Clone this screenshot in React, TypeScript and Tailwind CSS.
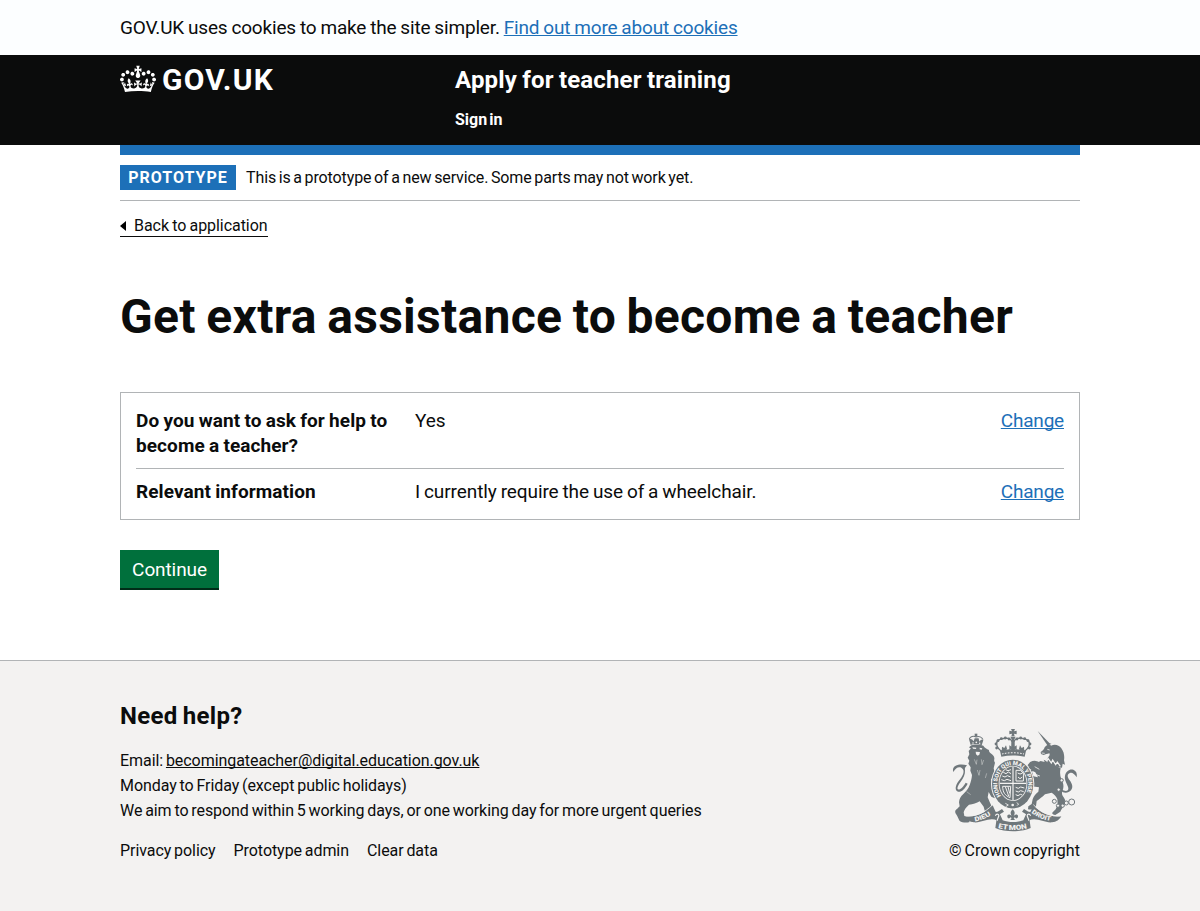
import React from "react";

const CROWN =
  "M25 30.2c3.5 1.5 7.7-.2 9.1-3.7 1.5-3.6-.2-7.8-3.9-9.2-3.6-1.4-7.6.3-9.1 3.9-1.4 3.5.3 7.5 3.9 9zM9 39.5c3.6 1.5 7.8-.2 9.2-3.7 1.5-3.6-.2-7.8-3.9-9.1-3.6-1.5-7.6.2-9.1 3.8-1.4 3.5.3 7.5 3.8 9zM4.4 57.2c3.5 1.5 7.7-.2 9.1-3.8 1.5-3.6-.2-7.7-3.9-9.1-3.5-1.5-7.6.3-9.1 3.8-1.4 3.5.3 7.6 3.9 9.1zm38.3-21.4c3.5 1.5 7.7-.2 9.1-3.8 1.5-3.6-.2-7.7-3.9-9.1-3.6-1.5-7.6.3-9.1 3.8-1.3 3.6.4 7.7 3.9 9.1zm64.4-5.6c-3.6 1.5-7.8-.2-9.1-3.7-1.5-3.6.2-7.8 3.8-9.2 3.6-1.4 7.7.3 9.2 3.9 1.3 3.5-.4 7.5-3.9 9zm15.9 9.3c-3.6 1.5-7.7-.2-9.1-3.7-1.5-3.6.2-7.8 3.7-9.1 3.6-1.5 7.7.2 9.2 3.8 1.5 3.5-.3 7.5-3.8 9zm4.7 17.7c-3.6 1.5-7.8-.2-9.2-3.8-1.5-3.6.2-7.7 3.9-9.1 3.6-1.5 7.7.3 9.2 3.8 1.3 3.5-.4 7.6-3.9 9.1zM89.3 35.8c-3.6 1.5-7.8-.2-9.2-3.8-1.4-3.6.2-7.7 3.9-9.1 3.6-1.5 7.7.3 9.2 3.8 1.4 3.6-.3 7.7-3.9 9.1zM69.7 17.7l8.9 4.7V9.3l-8.9 2.8c-.2-.3-.5-.6-.9-.9L72.4 0H59.6l3.5 11.2c-.3.3-.6.5-.9.9l-8.8-2.8v13.1l8.8-4.7c.3.3.6.7.9.9l-5 15.4v.1c-.2.8-.4 1.6-.4 2.4 0 4.1 3.1 7.5 7 8.1h.2c.3 0 .7.1 1 .1.4 0 .7 0 1-.1h.2c4-.6 7.1-4.1 7.1-8.1 0-.8-.1-1.7-.4-2.4V34l-5.1-15.4c.4-.2.7-.6 1-.9zM66 92.8c16.9 0 32.8 1.1 47.1 3.2 4-16.9 8.9-26.7 14-33.5l-9.6-3.4c1 4.9 1.1 7.2 0 10.2-1.5-1.4-3-4.3-4.2-8.7L108.6 76c2.8-2 5-3.2 7.5-3.3-4.4 9.4-10 11.9-13.6 11.2-4.3-.8-6.3-4.6-5.6-7.9 1-4.7 5.7-5.9 8-.5 4.3-8.7-3-11.4-7.6-8.8 7.1-7.2 7.9-13.5 2.1-21.1-8 6.1-8.1 12.3-4.5 20.8-4.7-5.4-12.1-2.5-9.5 6.2 3.4-5.2 7.9-2 7.2 3.1-.6 4.3-6.4 7.8-13.5 7.2-10.3-.9-10.9-8-11.2-13.8 2.5-.5 7.1 1.8 11 7.3L80.2 60c-4.1 4.4-8 5.3-12.3 5.4 1.4-4.4 8-11.6 8-11.6H55.5s6.4 7.2 7.9 11.6c-4.2-.1-8-1-12.3-5.4l1.4 16.4c3.9-5.5 8.5-7.7 10.9-7.3-.3 5.8-.9 12.8-11.1 13.8-7.2.6-12.9-2.9-13.5-7.2-.7-5 3.8-8.3 7.1-3.1 2.7-8.7-4.6-11.6-9.4-6.2 3.7-8.5 3.6-14.7-4.6-20.8-5.8 7.6-5 13.9 2.2 21.1-4.7-2.6-11.9.1-7.7 8.8 2.3-5.5 7.1-4.2 8.1.5.7 3.3-1.3 7.1-5.7 7.9-3.5.7-9-1.8-13.5-11.2 2.5.1 4.7 1.3 7.5 3.3l-4.7-15.4c-1.2 4.4-2.7 7.2-4.3 8.7-1.1-3-.9-5.3 0-10.2l-9.5 3.4c5 6.9 9.9 16.7 14 33.5 14.8-2.1 30.8-3.2 47.7-3.2z";

function Container({ children, className = "" }: { children?: React.ReactNode; className?: string }) {
  return <div className={"mx-auto w-[960px] " + className}>{children}</div>;
}

function Crest() {
  const ink = "#6f777b";
  const paper = "#f3f2f1";
  return (
    <svg viewBox="27 24 393 315" width="131" height="105" fill={ink} stroke="none">
      {/* lion */}
      <path d="M88 84c0-5 5-8 10-9 10-2 22-2 32 2 4 6 10 10 17 13-1 4 2 7 5 10 8 5 12 11 11 17-1 5-1 7 2 11l-4 17 3 13 4 12-2 12-8-7-5 3 3 12 7 11 6 12 1 15-6 7-10-5-8-14-3 16 6 14 7 15 5 10 10 9-2 13c-12 2-22-2-28-9-6-7-8-16-10-24l-12-16c-9 6-20 9-32 10-9 8-14 15-16 23l2 10 12 8 4 11c-10 3-22 2-30-3-4-7-6-14-11-21-4-6-3-12 3-15l8-8-2-12c1-11 5-18 13-25 8-8 15-15 19-27 4-10 6-19 7-30l-5-13 1-10-7-11 3-9-5-9 5-10-2-10 7-8z" />
      <path d="M83 191c-10 18-19 26-29 24-10-3-9-18 2-32 12-14 22-32 8-40-10-4-17 2-24 13-3-9 0-16 7-19 8-4 22-5 34-1-6 6-7 10-6 15 1 12-5 24-13 34-8 11-12 20-8 23 5 3 15-6 23-20z" />
      <path d="M87 58l5 17c9-4 24-4 33 1l5-15c-4-3-8-2-12 4l-2-10h-12l-3 9c-4-7-9-9-14-6z" />
      <path d="M88 57c3-8 12-10 20-6 9-3 18 0 21 8" fill="none" stroke={ink} strokeWidth="3.2" />
      <path d="M104 41h8v9h-8z" />
      <g fill={paper}>
        <circle cx="99" cy="69" r="2.2" />
        <circle cx="109" cy="67" r="2.6" />
        <circle cx="119" cy="70" r="2.2" />
        <path d="M97 82l12 1-1 4-9-1zM119 83l8 2-2 4-6-1zM107 95l13 1-2 8-5 3-5-4z" />
      </g>
      <path d="M103 118l6 15 2-14M124 118l2 16 5-14M112 150l5 16 3-16M80 215l12 9M140 160l-4 14" fill="none" stroke={paper} strokeWidth="1.2" />

      {/* royal crown */}
      <path d="M213 27h12l-3 7 8-2v11l-8-2 2 8h-10l2-8-8 2V32l8 2z" />
      <path d="M188 96c-20-13-25-32-8-38 18-6 34-4 36 8v30M250 96c20-13 25-32 8-38-18-6-34-4-36 8v30" fill="none" stroke={ink} strokeWidth="4" />
      {[[184, 56], [174, 62], [168, 72], [170, 84], [254, 56], [264, 62], [270, 72], [268, 84], [196, 54], [242, 54], [207, 57], [231, 57]].map(([x, y]) => (
        <circle key={`${x}-${y}`} cx={x} cy={y} r="4.2" />
      ))}
      <path d="M211 50h16l-5 10 1 20 7-4v14l-7-4 3 8h-14l3-8-7 4V76l7 4 1-20zM186 80l7 4 5-8 3 10-4 10h-12zM252 80l-7 4-5-8-3 10 4 10h12z" />
      <path d="M180 92c22-6 56-6 78 0l-4 18c-22-5-48-5-70 0z" />
      <path d="M186 102c20-5 46-5 66 0" fill="none" stroke={paper} strokeWidth="3" strokeDasharray="5 4" />

      {/* unicorn */}
      <path d="M293 33l38 39-8 5z" />
      <path d="M327 69l6 8c12-5 24-2 31 8 8 11 10 23 8 36l3 13-7-3-2 12c-18-1-38-10-49-20l8-12c4-4 5-8 3-11-7 3-12 2-17 5l-8-3-1-6c6-3 10-8 12-14 5-8 14-10 21-10z" />
      <path d="M311 119l51 26c-3 12-2 22 2 32 7 13 8 24 4 34-4 9-2 14 3 21 6 9 7 17 1 25-4 7-9 11-11 18l-15 10c-9-2-11-5-8-8l9-9 6-14-1-16c-3-10-10-15-17-20l-20 5c-8 8-16 14-25 20l-2 16c-4 9-13 11-24 9l1-9 10-7 3-14c3-11 10-17 17-23l2-13-22-3-14-7 3-15 16-8 14 3-8-15-16-11-3-10 8-8 14 1 13-6 12 3z" />
      <path d="M364 208c12 8 22 6 21-4-3-12-13-24-10-37 3-14 14-21 25-18 9 4 12 11 10 23-7-10-13-15-20-13-10 3-8 13-1 22 8 11 11 21 4 30-7 8-17 9-26 5z" />
      <path d="M301 133c-9-8-19-9-29-4l-7 9M265 142l12 2M296 158c-10-8-20-10-27-3M274 158l4 16 14 7" fill="none" stroke={ink} strokeWidth="6.5" />
      <g fill="none" stroke={paper} strokeWidth="2.4">
        <path d="M312 112l9 11 3-8 10 14 4-9 9 14 5-8 9 13" strokeWidth="3.6" />
        <path d="M305 99l9 1M322 88l7 2M284 140l14 8M288 164l12 4" />
      </g>
      <g fill={paper} stroke={ink} strokeWidth="3">
        <circle cx="343" cy="244" r="6" />
        <circle cx="354" cy="257" r="5" />
        <circle cx="368" cy="257" r="5" />
        <circle cx="379" cy="249" r="6" />
        <circle cx="395" cy="246" r="9" />
        <circle cx="356" cy="209" r="5" />
        <circle cx="365" cy="181" r="5" />
      </g>

      {/* garter and shield */}
      <ellipse cx="218" cy="192" rx="65" ry="75" fill={paper} />
      <ellipse cx="218" cy="192" rx="62" ry="73" />
      <ellipse cx="219" cy="190" rx="43" ry="53" fill={paper} />
      <ellipse cx="219" cy="190" rx="40.5" ry="50.5" />
      <path d="M219 140v100M179 190h80" stroke={paper} strokeWidth="3.5" />
      <g fill="none" stroke={paper} strokeWidth="3">
        <path d="M190 157l8 4 7-5 8 5M187 168l8 3 7-4 10 4M184 179l9 3 8-4 12 4M197 149l7 3 9-3" />
        <path d="M228 151h14l9 11-1 21h-22zM233 159l7 3 7-2M234 171l6 5 7-5" />
        <path d="M188 199c0 18 7 27 22 34l2-34zM196 200l10 28M204 200l5 20" />
        <path d="M227 202l8 3 7-4 11 3M227 213l8 3 7-4 9 3M227 224l7 3 7-4 6 2" />
      </g>
      <path id="crest-garter" d="M183 228A46.500 56.500 0 1 1 254 228" fill="none" />
      <text fill={paper} fontFamily="Roboto" fontWeight="900" fontSize="17.500">
        <textPath href="#crest-garter" textLength="226" lengthAdjust="spacingAndGlyphs">HONI SOIT QUI MAL Y PENSE</textPath>
      </text>
      <path d="M200 246h36l3 10-14 9h-13l-13-10z" />
      <circle cx="218" cy="255" r="4" fill={paper} />
      <path d="M196 250l9 5-8 5M230 248l6 4-5 5" fill="none" stroke={paper} strokeWidth="2.5" />

      {/* motto ribbons */}
      <path d="M74 289c32 4 60-8 84-33l10 22 18-11 6 8-20 12v14c-26-10-44 8-70 6-14-1-22-8-28-18z" />
      <path d="M364 289c-32 4-60-8-84-33l-10 22-18-11-6 8 20 12v14c26-10 44 8 70 6 14-1 22-8 28-18z" />
      <path d="M74 287c32 4 60-8 84-33M364 287c-32 4-60-8-84-33" fill="none" stroke={paper} strokeWidth="2.500" />
      <path d="M160 286c2-10 12-14 18-8l10 23c18 7 44 7 62 0l10-23c6-6 16-2 18 8l-9 16 3 22c-30 13-76 13-106 0l3-22z" />
      <path d="M166 287c4-7 12-5 10 2l-5 13M272 287c-4-7-12-5-10 2l5 13" fill="none" stroke={paper} strokeWidth="3.5" />
      <path d="M218 268c8 7 7 14 3 20 7-8 14-5 13 2-1 6-7 7-9 2l-4 2 4 6h-14l4-6-4-2c-2 5-8 4-9-2-1-7 6-10 13-2-4-6-5-13 3-20z" />
      <g fill={paper} fontFamily="Roboto" fontWeight="900" fontSize="19">
        <path id="crest-dieu" d="M105 304q29-4 56-25" fill="none" />
        <text><textPath href="#crest-dieu" textLength="52" lengthAdjust="spacingAndGlyphs">DIEU</textPath></text>
        <path id="crest-droit" d="M274 278q27 22 66 26" fill="none" />
        <text><textPath href="#crest-droit" textLength="64" lengthAdjust="spacingAndGlyphs">DROIT</textPath></text>
        <path id="crest-mon" d="M174 324q44 12 90 0" fill="none" />
        <text fontSize="21"><textPath href="#crest-mon" textLength="88" lengthAdjust="spacingAndGlyphs">ET MON</textPath></text>
      </g>
    </svg>
  );
}

function SummaryRow({ label, value, last }: { label: string; value: string; last?: boolean }) {
  return (
    <div className={"flex text-[19px] leading-[25px] " + (last ? "pt-2.5" : "border-b border-[#b1b4b6] pb-[10px]")}>
      <div className="w-[279px] pr-5 font-bold tracking-[0.08px] [word-spacing:-0.6px]">{label}</div>
      <div className="flex-1 tracking-[-0.09px] [word-spacing:-0.7px]">{value}</div>
      <a className="tracking-[-0.2px] text-[#1d70b8] underline decoration-1 underline-offset-1 [text-decoration-skip-ink:none]">Change</a>
    </div>
  );
}

export default function App() {
  return (
    <div className="flex min-h-[911px] flex-col bg-white font-['Roboto',sans-serif] text-[#0b0c0c]">
      <div className="bg-[#fcfeff]">
        <Container className="h-[55px] pt-[15px] text-[19px] leading-[25px] tracking-[-0.17px] [word-spacing:-0.6px]">
          GOV.UK uses cookies to make the site simpler.{" "}
          <a className="text-[#1d70b8] underline decoration-1 underline-offset-1 [text-decoration-skip-ink:none]">Find out more about cookies</a>
        </Container>
      </div>

      <header className="h-[90px] bg-[#0b0c0c] text-white">
        <Container className="flex pt-2.5">
          <div className="flex w-[335px] gap-[6px]">
            <svg viewBox="0 0 132 97" width="36" height="28" fill="currentColor" fillRule="evenodd">
              <path d={CROWN} />
            </svg>
            <span className="text-[30px] leading-[30px] font-bold tracking-[1.2px]">GOV.UK</span>
          </div>
          <div>
            <div className="text-[24px] leading-[30px] font-bold tracking-[0.15px] [word-spacing:-0.8px]">Apply for teacher training</div>
            <div className="mt-[15px] text-[16px] leading-5 font-bold [word-spacing:-2px]">Sign in</div>
          </div>
        </Container>
      </header>

      <Container className="h-[515px]">
        <div className="h-2.5 bg-[#1d70b8]" />
        <div className="flex h-[46px] gap-2.5 border-b border-[#b1b4b6] pt-2.5">
          <strong className="flex h-[25px] w-[116px] items-center justify-center bg-[#1d70b8] text-[16px] font-bold tracking-[1px] text-white">
            PROTOTYPE
          </strong>
          <span className="text-[16px] leading-[25px] tracking-[-0.11px] [word-spacing:-1.2px]">
            This is a prototype of a new service. Some parts may not work yet.
          </span>
        </div>
        <a className="mt-[15px] inline-flex h-[21px] items-center border-b border-[#0b0c0c] text-[16px] leading-5 tracking-[-0.05px] [word-spacing:-0.7px]">
          <svg width="6" height="10" viewBox="0 0 6 10" className="mr-2">
            <path d="M6 0v10L0 5z" />
          </svg>
          Back to application
        </a>
        <h1 className="mt-[54px] text-[48px] leading-[50px] font-bold tracking-[0.3px] whitespace-nowrap [word-spacing:-1.8px]">
          Get extra assistance to become a teacher
        </h1>
        <section className="mt-[50px] h-[128px] border border-[#b1b4b6] p-[15px]">
          <SummaryRow label="Do you want to ask for help to become a teacher?" value="Yes" />
          <SummaryRow label="Relevant information" value="I currently require the use of a wheelchair." last />
        </section>
        <button className="mt-[30px] block h-10 w-[99px] border-b-2 border-[#002d18] bg-[#00703c] text-[19px] leading-[25px] tracking-[-0.1px] text-white">
          Continue
        </button>
      </Container>

      <footer className="flex-1 border-t border-[#b1b4b6] bg-[#f3f2f1]">
        <Container className="flex justify-between pt-10 text-[16px] leading-[25px] tracking-[-0.06px] [word-spacing:-1.1px]">
          <div>
            <h2 className="text-[24px] leading-[30px] font-bold tracking-[0.3px]">Need help?</h2>
            <div className="mt-[17px]">
              <div>
                Email: <a className="underline decoration-1 underline-offset-1 [text-decoration-skip-ink:none]">becomingateacher@digital.education.gov.uk</a>
              </div>
              <div>Monday to Friday (except public holidays)</div>
              <div>We aim to respond within 5 working days, or one working day for more urgent queries</div>
            </div>
            <nav className="mt-[15px] flex gap-[18px]">
              <a>Privacy policy</a>
              <a>Prototype admin</a>
              <a>Clear data</a>
            </nav>
          </div>
          <div className="flex w-[131px] flex-col pt-[27px]">
            <Crest />
            <span className="mt-[5px] whitespace-nowrap tracking-[0.04px]">© Crown copyright</span>
          </div>
        </Container>
      </footer>
    </div>
  );
}
